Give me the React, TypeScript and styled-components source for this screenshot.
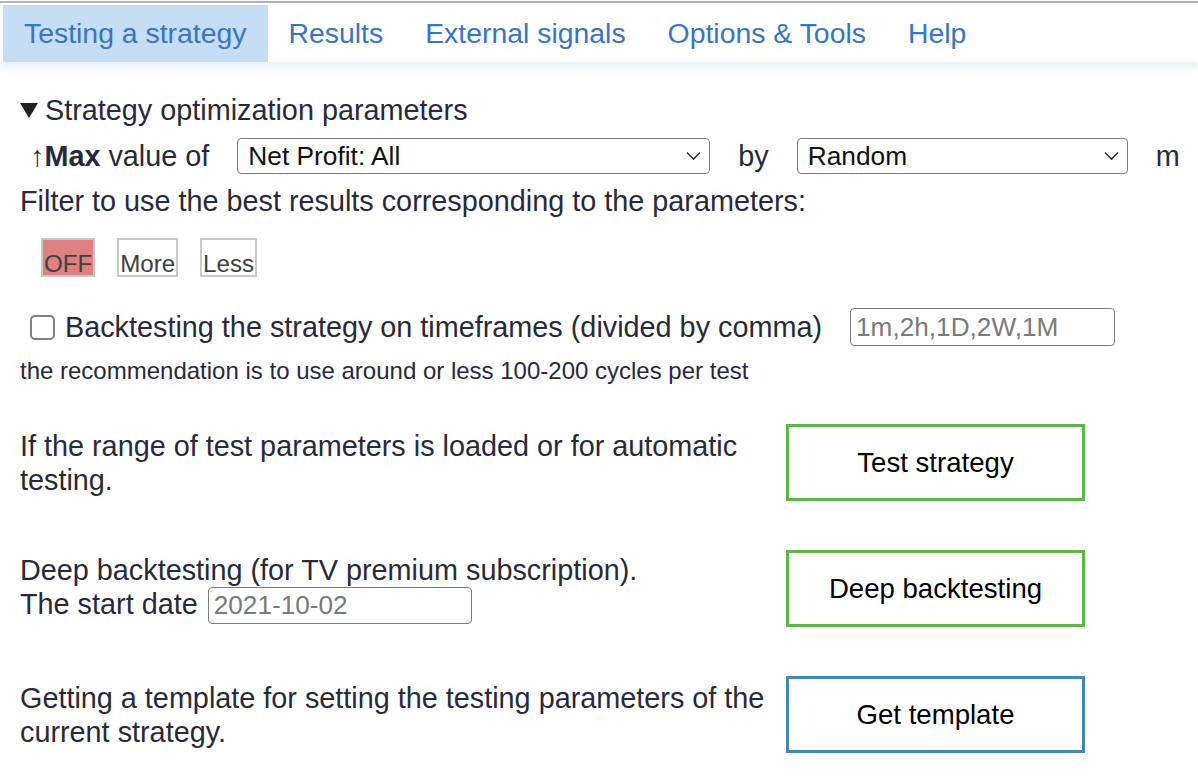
import React from "react";
import styled, { createGlobalStyle } from "styled-components";

const Global = createGlobalStyle`
  html, body { margin: 0; padding: 0; background: #fff; }
  body { font-family: "Liberation Sans", Arial, sans-serif; color: #282a3b; }
  * { box-sizing: border-box; }
`;

const Page = styled.div`
  width: 1198px;
  height: 782px;
  overflow: hidden;
  background: #fff;
`;

const Nav = styled.nav`
  margin-top: 1px;
  border-top: 2px solid #b3b3b3;
  padding: 2px 0 0 3px;
  display: flex;
  box-shadow: 0 5px 8px rgba(180, 208, 242, 0.35);
  position: relative;
`;

const Tab = styled.a<{ $active?: boolean }>`
  display: block;
  height: 57px;
  line-height: 57px;
  padding: 0 21px;
  font-size: 28.4px;
  color: #3a74c4;
  text-decoration: none;
  background: ${(p) => (p.$active ? "#c5ddf5" : "transparent")};
  white-space: nowrap;
`;

const Content = styled.div`
  padding: 31px 0 0 20px;
`;

const Summary = styled.div`
  display: flex;
  align-items: center;
  gap: 7px;
  font-size: 28.8px;
  line-height: 34px;
  height: 34px;
`;

const Row = styled.div<{ $mt: number }>`
  display: flex;
  align-items: center;
  margin-top: ${(p) => p.$mt}px;
  white-space: nowrap;
`;

const MaxRow = styled(Row)`
  margin-left: 10px;
  gap: 28px;
  font-size: 28.8px;
  height: 36px;
`;

const Label = styled.span`
  font-size: 28.8px;
`;

const SelectWrap = styled.div<{ $w: number }>`
  position: relative;
  flex: none;
  width: ${(p) => p.$w}px;
  height: 36px;
`;

const Select = styled.select`
  appearance: none;
  -webkit-appearance: none;
  width: 100%;
  height: 100%;
  border: 1px solid #7c7c7c;
  border-radius: 4px;
  background: #fff;
  font-family: "Liberation Sans", Arial, sans-serif;
  font-size: 26.3px;
  color: #111;
  padding: 0 30px 0 10px;
  outline: none;
`;

const Chevron = styled.svg`
  position: absolute;
  right: 9px;
  top: 50%;
  transform: translateY(-50%);
  pointer-events: none;
`;

const Text = styled.div<{ $mt: number }>`
  margin-top: ${(p) => p.$mt}px;
  font-size: 28.8px;
  line-height: 34px;
`;

const Small = styled.div`
  margin-top: 11px;
  font-size: 24px;
  line-height: 28px;
`;

const ToggleRow = styled(Row)`
  margin-left: 21px;
  gap: 22px;
`;

const Toggle = styled.button<{ $on?: boolean }>`
  height: 39px;
  padding: 10px 1px 0;
  border: 2px solid #c9c9c9;
  background: ${(p) => (p.$on ? "#e08080" : "#fff")};
  color: #404040;
  font-family: "Liberation Sans", Arial, sans-serif;
  font-size: 24.1px;
  line-height: 27px;
  cursor: pointer;
`;

const CheckRow = styled(Row)`
  margin-left: 10px;
  height: 38px;
  font-size: 28.8px;
`;

const Check = styled.input`
  appearance: none;
  -webkit-appearance: none;
  width: 25px;
  height: 25px;
  margin: 0 10px 0 0;
  border: 2px solid #808080;
  border-radius: 5px;
  background: #fff;
  flex: none;
`;

const TextInput = styled.input<{ $w: number }>`
  width: ${(p) => p.$w}px;
  height: 38px;
  border: 1px solid #7c7c7c;
  border-radius: 4px;
  padding: 0 5px;
  font-family: "Liberation Sans", Arial, sans-serif;
  font-size: 26.2px;
  color: #222;
  outline: none;
  &::placeholder { color: #7a7a7a; }
`;

const TimeInput = styled(TextInput)`
  margin-left: 28px;
`;

const DateInput = styled(TextInput)`
  height: 37px;
  margin-left: 10px;
  vertical-align: middle;
`;

const Actions = styled.div`
  margin-top: 39px;
  display: grid;
  grid-template-columns: 756px 299px;
  column-gap: 10px;
  row-gap: 49px;
  align-items: center;
`;

const Desc = styled.div`
  font-size: 28.8px;
  line-height: 34px;
`;

const ActionButton = styled.button<{ $color: string }>`
  height: 77px;
  width: 299px;
  border: 3px solid ${(p) => p.$color};
  background: #fff;
  color: #000;
  font-family: "Liberation Sans", Arial, sans-serif;
  font-size: 27.6px;
  cursor: pointer;
`;

const Tri = () => (
  <svg width="18" height="15" viewBox="0 0 18 15">
    <polygon points="0,0 18,0 9,15" fill="#222" />
  </svg>
);

const Down = () => (
  <Chevron width="15" height="9" viewBox="0 0 15 9">
    <polyline points="1,1 7.5,7.5 14,1" fill="none" stroke="#333" strokeWidth="1.6" />
  </Chevron>
);

const GREEN = "#5db645";
const BLUE = "#4387b6";

export default function App() {
  return (
    <Page>
      <Global />
      <Nav>
        <Tab $active>Testing a strategy</Tab>
        <Tab>Results</Tab>
        <Tab>External signals</Tab>
        <Tab>Options &amp; Tools</Tab>
        <Tab>Help</Tab>
      </Nav>
      <Content>
        <Summary>
          <Tri />
          <span>Strategy optimization parameters</span>
        </Summary>
        <MaxRow $mt={11}>
          <Label>
            ↑<b>Max</b> value of
          </Label>
          <SelectWrap $w={473}>
            <Select defaultValue="np">
              <option value="np">Net Profit: All</option>
            </Select>
            <Down />
          </SelectWrap>
          <Label>by</Label>
          <SelectWrap $w={331}>
            <Select defaultValue="r">
              <option value="r">Random</option>
            </Select>
            <Down />
          </SelectWrap>
          <Label>m</Label>
        </MaxRow>
        <Text $mt={10}>Filter to use the best results corresponding to the parameters:</Text>
        <ToggleRow $mt={20}>
          <Toggle $on>OFF</Toggle>
          <Toggle>More</Toggle>
          <Toggle>Less</Toggle>
        </ToggleRow>
        <CheckRow $mt={31}>
          <Check type="checkbox" />
          <span>Backtesting the strategy on timeframes (divided by comma)</span>
          <TimeInput $w={265} placeholder="1m,2h,1D,2W,1M" />
        </CheckRow>
        <Small>the recommendation is to use around or less 100-200 cycles per test</Small>
        <Actions>
          <Desc>If the range of test parameters is loaded or for automatic testing.</Desc>
          <ActionButton $color={GREEN}>Test strategy</ActionButton>
          <Desc>
            Deep backtesting (for TV premium subscription).
            <br />
            The start date
            <DateInput $w={264} placeholder="2021-10-02" />
          </Desc>
          <ActionButton $color={GREEN}>Deep backtesting</ActionButton>
          <Desc>Getting a template for setting the testing parameters of the current strategy.</Desc>
          <ActionButton $color={BLUE}>Get template</ActionButton>
        </Actions>
      </Content>
    </Page>
  );
}
